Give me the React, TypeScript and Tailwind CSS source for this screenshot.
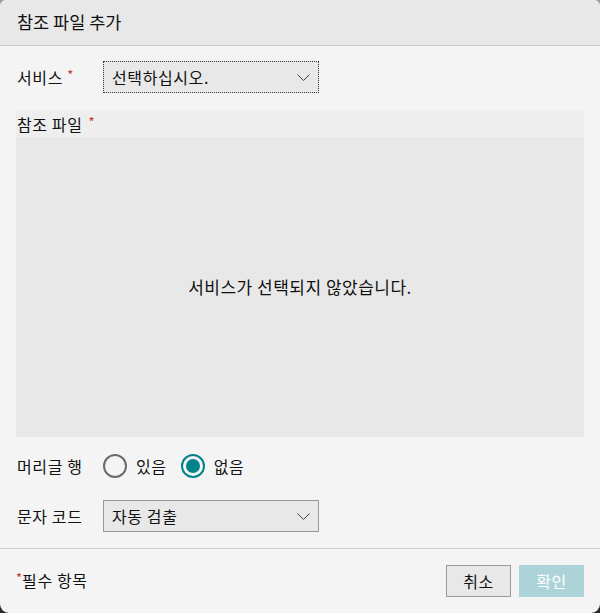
import React from "react";

const font = { fontFamily: '"Noto Sans CJK KR", "Noto Sans", sans-serif' };

function Chevron() {
  return (
    <svg width="13" height="7" viewBox="0 0 13 7" fill="none">
      <path d="M0.5 0.5l6 6 6-6" stroke="#444" strokeWidth="1" />
    </svg>
  );
}

export default function App() {
  return (
    <div
      className="w-[600px] h-[613px] bg-[linear-gradient(#9a9a9a,#2a2a2a)] text-[#111]"
      style={font}
    >
      <div className="w-[600px] h-[613px] bg-[#f4f4f4] rounded-t-[6px] rounded-b-[9px] overflow-hidden flex flex-col tracking-[0.6px]">
        <div className="h-[46px] bg-[#e8e8e8] border-b border-[#cccccc] flex items-center pl-[17px] pb-[2px] text-[17.5px] tracking-[0px] leading-none">
          참조 파일 추가
        </div>
        <div className="flex flex-col px-4 pt-[15px]">
          <div className="flex items-center h-[32px]">
            <div className="w-[87px] text-[16px] pl-[1px]">
              서비스 <span className="text-[#c0392b] text-[13px] align-top">*</span>
            </div>
            <div className="w-[216px] h-[32px] bg-[#e8e8e8] border border-dotted border-[#333] flex items-center justify-between pl-[8px] pr-[8px] text-[16px]">
              <span>선택하십시오.</span>
              <Chevron />
            </div>
          </div>
          <div className="mt-[17px] flex flex-col">
            <div className="h-[27px] bg-[#eeeeee] text-[16px] flex items-center pl-[1px]">
              참조 파일 <span className="text-[#c0392b] text-[13px] ml-[6px] -mt-[4px]">*</span>
            </div>
            <div className="h-[300px] bg-[#e8e8e8] flex items-center justify-center text-[17px] tracking-[0.5px]">
              서비스가 선택되지 않았습니다.
            </div>
          </div>
          <div className="mt-[17px] flex items-center h-[24px] text-[16px]">
            <div className="w-[87px] pl-[1px]">머리글 행</div>
            <div className="w-[24px] h-[24px] rounded-full border-2 border-[#6b6b6b] bg-[#f4f4f4]" />
            <span className="ml-[9px]">있음</span>
            <div className="ml-[14px] w-[24px] h-[24px] rounded-full border-2 border-[#00838a] bg-[#f4f4f4] flex items-center justify-center">
              <div className="w-[14px] h-[14px] rounded-full bg-[#00838a]" />
            </div>
            <span className="ml-[9px]">없음</span>
          </div>
          <div className="mt-[22px] flex items-center h-[32px]">
            <div className="w-[87px] text-[16px] pl-[1px]">문자 코드</div>
            <div className="w-[216px] h-[32px] bg-[#e8e8e8] border border-[#999999] flex items-center justify-between pl-[8px] pr-[8px] text-[16px]">
              <span>자동 검출</span>
              <Chevron />
            </div>
          </div>
        </div>
        <div className="mt-[16px] border-t border-[#cccccc] flex items-center justify-between px-4 pt-[16px] pb-[16px]">
          <div className="text-[16px] flex items-center -mt-[3px]">
            <span className="text-[#c0392b] text-[13px] -mt-[4px] tracking-[0px]">*</span>
            <span>필수 항목</span>
          </div>
          <div className="flex gap-[8px]">
            <div className="w-[65px] h-[32px] bg-[#e8e8e8] border border-[#999999] flex items-center justify-center text-[16px]">
              취소
            </div>
            <div className="w-[65px] h-[32px] bg-[#acd4d8] flex items-center justify-center text-[16px] text-white">
              확인
            </div>
          </div>
        </div>
      </div>
    </div>
  );
}
